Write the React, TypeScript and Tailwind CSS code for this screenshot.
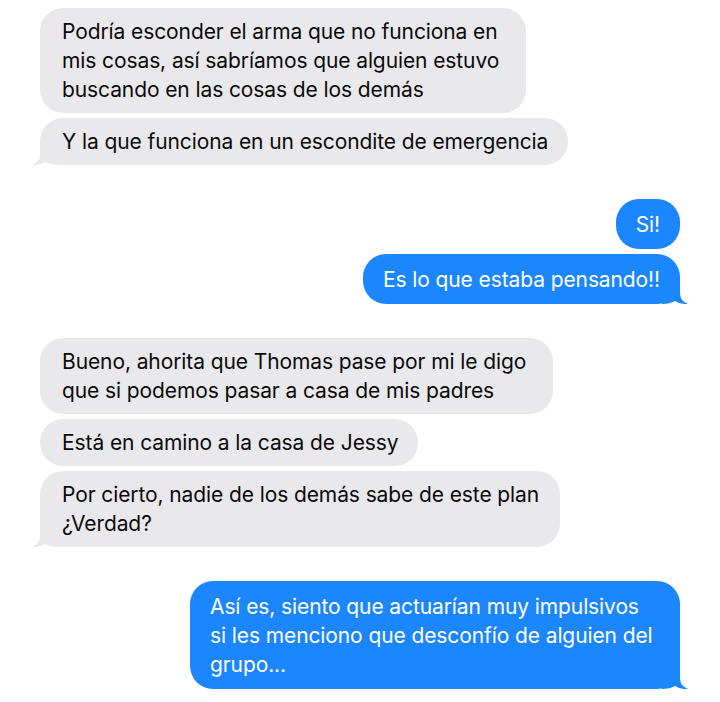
import React from "react";

type Msg = { lines: string[]; w?: string; tail?: boolean };

const GRAY = "#e9e9eb";
const BLUE = "#1b86fd";

function Tail({ side, color }: { side: "left" | "right"; color: string }) {
  return (
    <svg
      width="26"
      height="22"
      viewBox="0 0 26 22"
      className={
        side === "left"
          ? "absolute bottom-0 left-[-8px]"
          : "absolute bottom-0 right-[-8px] -scale-x-100"
      }
    >
      <path d="M8 0 L8 11 Q8 19 0 22 Q8 22.5 13 19 Q18 22 26 22 L26 0 Z" fill={color} />
    </svg>
  );
}

function Bubble({ m, me }: { m: Msg; me?: boolean }) {
  return (
    <div
      className={
        (me
          ? "self-end bg-[#1b86fd] text-white pl-5 pr-5 py-[10.5px] "
          : "self-start bg-[#e9e9eb] text-[#0a0a0a] pl-[22px] pr-5 py-[9px] ") +
        "relative rounded-[23px] text-[21px] leading-[29px] tracking-[-0.1px] whitespace-nowrap " +
        (m.w ?? "w-fit")
      }
    >
      {m.tail && <Tail side={me ? "right" : "left"} color={me ? BLUE : GRAY} />}
      <p className="relative">
        {m.lines.map((l, i) => (
          <React.Fragment key={i}>
            {i > 0 && <br />}
            {l}
          </React.Fragment>
        ))}
      </p>
    </div>
  );
}

function Group({ msgs, me }: { msgs: Msg[]; me?: boolean }) {
  return (
    <div className="flex flex-col gap-[5px]">
      {msgs.map((m, i) => (
        <Bubble key={i} m={m} me={me} />
      ))}
    </div>
  );
}

export default function App() {
  return (
    <div
      className="w-[720px] h-[702px] bg-white px-10 pt-2 flex flex-col gap-[34px] overflow-hidden"
      style={{ fontFamily: "Inter, 'Noto Sans', sans-serif" }}
    >
      <Group
        msgs={[
          {
            lines: [
              "Podría esconder el arma que no funciona en",
              "mis cosas, así sabríamos que alguien estuvo",
              "buscando en las cosas de los demás",
            ],
            w: "w-[486px]",
          },
          { lines: ["Y la que funciona en un escondite de emergencia"], tail: true },
        ]}
      />
      <Group
        me
        msgs={[
          { lines: ["Si!"] },
          { lines: ["Es lo que estaba pensando!!"], tail: true },
        ]}
      />
      <Group
        msgs={[
          {
            lines: [
              "Bueno, ahorita que Thomas pase por mi le digo",
              "que si podemos pasar a casa de mis padres",
            ],
            w: "w-[513px]",
          },
          { lines: ["Está en camino a la casa de Jessy"] },
          {
            lines: ["Por cierto, nadie de los demás sabe de este plan", "¿Verdad?"],
            w: "w-[520px]",
            tail: true,
          },
        ]}
      />
      <Group
        me
        msgs={[
          {
            lines: [
              "Así es, siento que actuarían muy impulsivos",
              "si les menciono que desconfío de alguien del",
              "grupo...",
            ],
            w: "w-[490px]",
            tail: true,
          },
        ]}
      />
    </div>
  );
}
